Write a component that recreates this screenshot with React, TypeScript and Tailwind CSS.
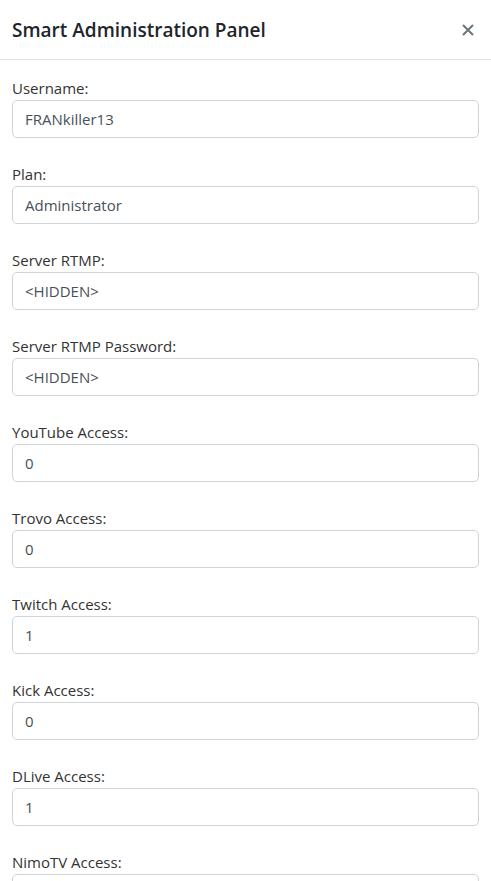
import React from 'react';

const fields = [
  { label: 'Username:', value: 'FRANkiller13' },
  { label: 'Plan:', value: 'Administrator' },
  { label: 'Server RTMP:', value: '<HIDDEN>' },
  { label: 'Server RTMP Password:', value: '<HIDDEN>' },
  { label: 'YouTube Access:', value: '0' },
  { label: 'Trovo Access:', value: '0' },
  { label: 'Twitch Access:', value: '1' },
  { label: 'Kick Access:', value: '0' },
  { label: 'DLive Access:', value: '1' },
  { label: 'NimoTV Access:', value: '0' },
];

export default function App() {
  return (
    <div className="w-[491px] h-[881px] overflow-hidden bg-white font-['Open_Sans',sans-serif] text-[#212529]">
      <div className="h-[60px] px-3 flex items-center justify-between border-b border-[#dee2e6]">
        <h5 className="text-[19px] font-semibold leading-[30px] text-[#212529]">Smart Administration Panel</h5>
        <button className="mr-[5px] text-[#6c757d]">
          <svg width="12" height="12" viewBox="0 0 12 12" fill="none" stroke="currentColor" strokeWidth="2">
            <path d="M1 1L11 11M11 1L1 11" />
          </svg>
        </button>
      </div>
      <div className="px-3 pt-4 flex flex-col gap-6">
        {fields.map((f) => (
          <div key={f.label} className="flex flex-col">
            <label className="text-[15px] leading-6 text-[#333333]">{f.label}</label>
            <input
              readOnly
              value={f.value}
              className="h-[38px] w-full px-3 text-[15px] text-[#495057] bg-white border border-[#ced4da] rounded-[5px] outline-none"
            />
          </div>
        ))}
      </div>
    </div>
  );
}
